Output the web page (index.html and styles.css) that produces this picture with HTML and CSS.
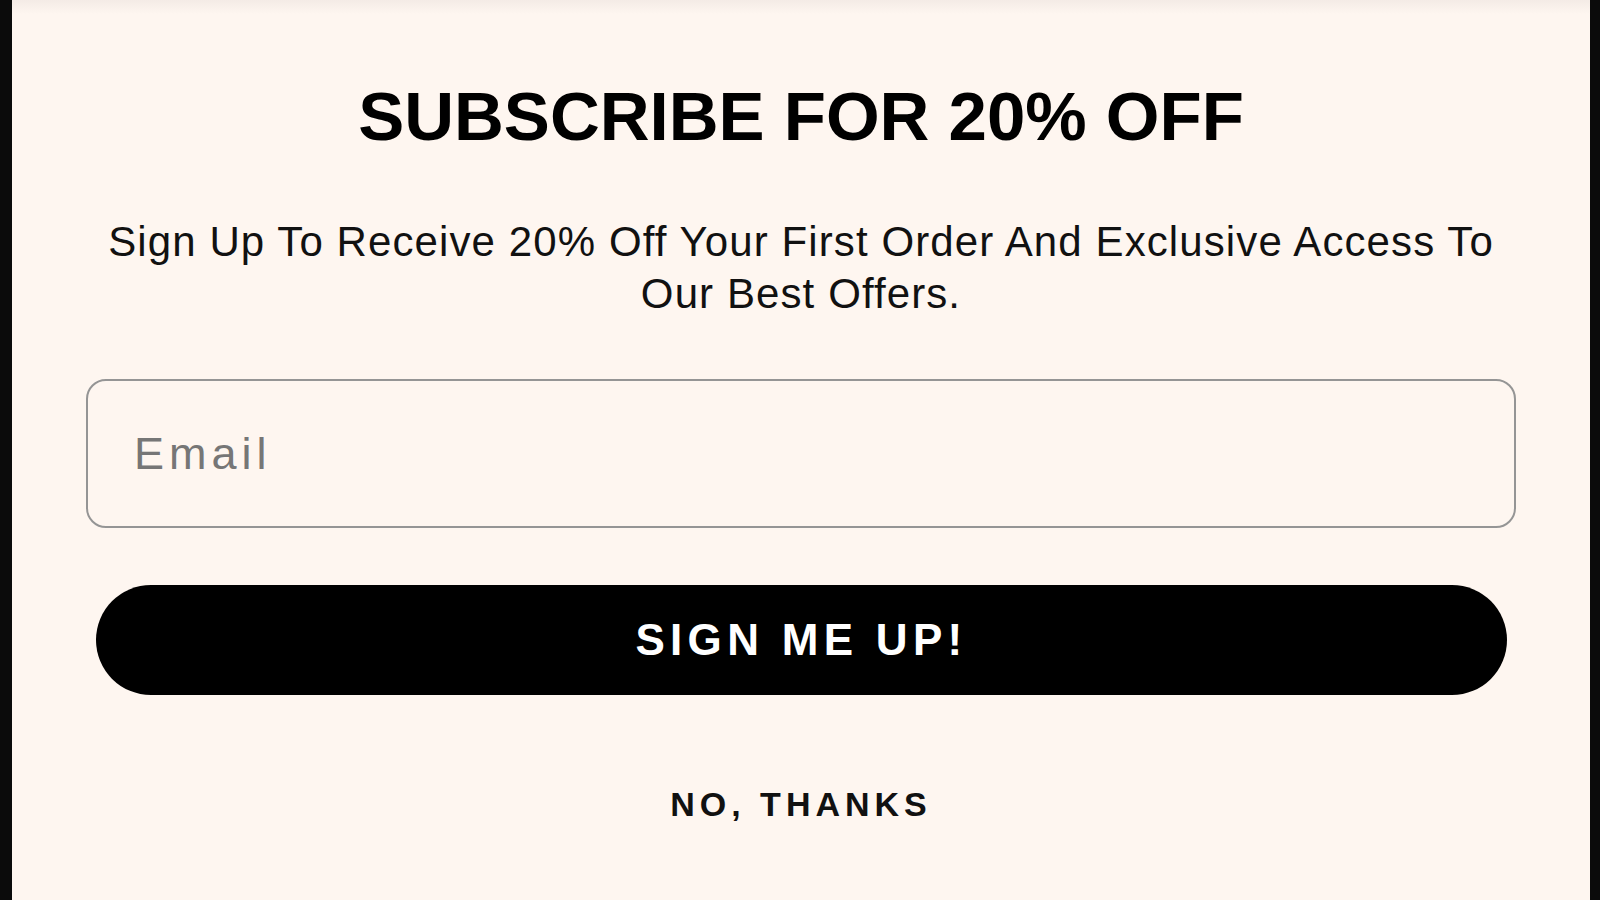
FILE: index.html
```html
<!DOCTYPE html>
<html lang="en">
<head>
  <meta charset="UTF-8" />
  <meta name="viewport" content="width=device-width, initial-scale=1.0"/>
  <title>Subscribe</title>
  <link rel="stylesheet" href="styles.css">
</head>
<body>
  <div class="popup">
    <h1 class="title">SUBSCRIBE FOR 20% OFF</h1>
    <p class="lead">Sign Up To Receive 20% Off Your First Order And Exclusive Access To Our Best Offers.</p>

    <form class="signup" onsubmit="return false;">
      <input type="email" class="email" placeholder="Email">
      <button type="submit" class="submit">SIGN ME UP!</button>
    </form>

    <button class="decline">NO, THANKS</button>
  </div>
</body>
</html>
```

FILE: styles.css
```css
body {
  margin: 0;
  background-color: #0b0b0b;
  display: flex;
  height: 900px;
  overflow: hidden;
  font-family: "Liberation Sans", Arial, sans-serif;
}

.popup {
  flex: 1;
  margin: 0 10px 0 12px;
  padding: 77px 74px 0;
  background: linear-gradient(#f4ebe6, #fef6f0 14px);
  display: flex;
  flex-direction: column;
  align-items: stretch;
  text-align: center;
  color: #111;
}

.title {
  margin: 0;
  font-size: 69px;
  line-height: 80px;
  font-weight: bold;
  color: #000;
}

.lead {
  margin: 59px 0 0;
  padding: 0 10px;
  font-size: 42px;
  line-height: 52px;
  letter-spacing: 1.1px;
  color: #111;
}

.signup {
  display: flex;
  flex-direction: column;
  margin-top: 59px;
}

.email {
  height: 149px;
  box-sizing: border-box;
  padding: 0 46px;
  border: 2px solid #959595;
  border-radius: 20px;
  background: transparent;
  font-family: "Liberation Sans", Arial, sans-serif;
  font-size: 45px;
  letter-spacing: 5px;
  color: #222;
  outline: none;
}

.email::placeholder {
  color: #767676;
}

.submit {
  margin: 57px 9px 0 10px;
  height: 110px;
  border: none;
  border-radius: 55px;
  background-color: #000;
  color: #fff;
  font-family: "Liberation Sans", Arial, sans-serif;
  font-size: 44px;
  font-weight: bold;
  letter-spacing: 5.3px;
  cursor: pointer;
}

.decline {
  align-self: center;
  margin-top: 90px;
  padding: 0;
  border: none;
  background: none;
  font-family: "Liberation Sans", Arial, sans-serif;
  font-size: 34px;
  font-weight: bold;
  letter-spacing: 5px;
  color: #111;
  cursor: pointer;
}
```
